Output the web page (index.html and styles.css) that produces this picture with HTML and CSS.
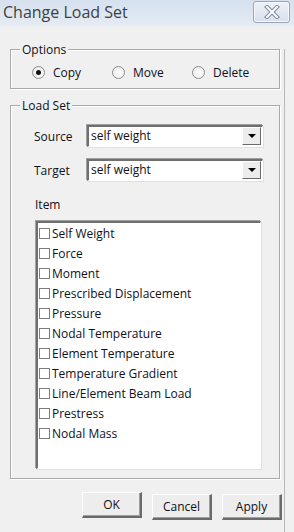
FILE: index.html
```html
<!DOCTYPE html>
<html lang="en">

<head>
    <meta charset="UTF-8">
    <title>Change Load Set</title>
    <link rel="stylesheet" href="styles.css">
</head>

<body>
    <div class="titlebar">
        <span class="title">Change Load Set</span>
        <span class="close-btn">
            <svg width="20" height="14" viewBox="0 0 20 14">
                <path d="M5 2 L15 12 M15 2 L5 12" stroke="#7d8797" stroke-width="4" stroke-linecap="square" fill="none"/>
                <path d="M5 2 L15 12 M15 2 L5 12" stroke="#ffffff" stroke-width="2" stroke-linecap="square" fill="none"/>
            </svg>
        </span>
    </div>

    <div class="content">
        <!-- Options -->
        <div class="group group-options">
            <span class="group-title">Options</span>
            <div class="radio-row">
                <label class="radio checked"><span class="dot"></span>Copy</label>
                <label class="radio"><span class="dot"></span>Move</label>
                <label class="radio"><span class="dot"></span>Delete</label>
            </div>
        </div>

        <!-- Load Set -->
        <div class="group group-loadset">
            <span class="group-title">Load Set</span>
            <div class="field-row">
                <span class="field-label">Source</span>
                <div class="combo">
                    <span class="combo-text">self weight</span>
                    <span class="combo-btn"><span class="arrow"></span></span>
                </div>
            </div>
            <div class="field-row">
                <span class="field-label">Target</span>
                <div class="combo">
                    <span class="combo-text">self weight</span>
                    <span class="combo-btn"><span class="arrow"></span></span>
                </div>
            </div>
            <div class="item-label">Item</div>
            <ul class="listbox">
                <li><span class="check"></span>Self Weight</li>
                <li><span class="check"></span>Force</li>
                <li><span class="check"></span>Moment</li>
                <li><span class="check"></span>Prescribed Displacement</li>
                <li><span class="check"></span>Pressure</li>
                <li><span class="check"></span>Nodal Temperature</li>
                <li><span class="check"></span>Element Temperature</li>
                <li><span class="check"></span>Temperature Gradient</li>
                <li><span class="check"></span>Line/Element Beam Load</li>
                <li><span class="check"></span>Prestress</li>
                <li><span class="check"></span>Nodal Mass</li>
            </ul>
        </div>

        <div class="buttons">
            <button class="btn btn-default">OK</button>
            <button class="btn">Cancel</button>
            <button class="btn">Apply</button>
        </div>
    </div>
</body>

</html>
```

FILE: styles.css
```css
body {
    margin: 0;
    padding: 0;
    width: 294px;
    height: 532px;
    background-color: #f0f0f0;
    font-family: "Open Sans", "Noto Sans", sans-serif;
    font-size: 12px;
    color: #101018;
    overflow: hidden;
}

/* title bar */
.titlebar {
    height: 26px;
    display: flex;
    align-items: center;
    justify-content: space-between;
    padding: 0 4px 0 3px;
    background: linear-gradient(to bottom, #d6e1ef, #e4ebf4);
}

.title {
    font-size: 16px;
    color: #3f3f3f;
    margin-top: -2px;
}

.close-btn {
    width: 35px;
    height: 20px;
    margin-top: -3px;
    display: flex;
    align-items: center;
    justify-content: center;
    border: 1px solid #9aa6b6;
    border-radius: 3px;
    background: linear-gradient(to bottom, #eef2f8, #d8e0eb);
    box-shadow: inset 0 0 0 1px #f6f8fb;
}

/* main area */
.content {
    width: 270px;
    height: 506px;
    padding: 0 4px 0 10px;
    border-right: 1px solid #b9b9b9;
}

.group {
    border: 1px solid #a9a9a9;
    box-shadow: 1px 1px 0 #fff, inset 1px 1px 0 #fff;
}

.group-title {
    display: table;
    margin: -7px 0 0 9px;
    padding: 0 2px;
    line-height: 14px;
    background-color: #f0f0f0;
}

.group-options {
    margin-top: 23px;
    padding: 0 0 9px 21px;
}

.group-options .group-title {
    margin-left: -12px;
}

.group-loadset {
    margin-top: 16px;
    padding: 0 0 9px 23px;
}

.group-loadset .group-title {
    margin-left: -14px;
}

/* radios */
.radio-row {
    display: flex;
    height: 14px;
    align-items: center;
    margin-top: 8px;
}

.radio {
    width: 80px;
    display: flex;
    align-items: center;
    gap: 8px;
}

.radio .dot {
    width: 11px;
    height: 11px;
    border: 1px solid #8d8d8d;
    border-radius: 50%;
    background: radial-gradient(circle at 60% 60%, #fdfdfd, #e6e6e6);
    display: flex;
    align-items: center;
    justify-content: center;
}

.radio.checked .dot::after {
    content: "";
    width: 5px;
    height: 5px;
    border-radius: 50%;
    background-color: #111;
}

/* combos */
.field-row {
    display: flex;
    align-items: center;
    margin-top: 12px;
}

.field-label {
    width: 53px;
}

.combo {
    width: 176px;
    height: 22px;
    box-sizing: border-box;
    display: flex;
    align-items: stretch;
    background-color: #fff;
    border-style: solid;
    border-width: 2px 1px 1px 2px;
    border-color: #6f6f6f #fff #fff #6f6f6f;
    box-shadow: -1px -1px 0 #a0a0a0, 1px 1px 0 #e0e0e0;
}

.combo-text {
    flex: 1;
    padding-left: 2px;
    line-height: 18px;
}

.combo-btn {
    width: 17px;
    margin: 0 1px 1px 0;
    display: flex;
    align-items: center;
    justify-content: center;
    background-color: #ececec;
    border-style: solid;
    border-width: 1px;
    border-color: #fff #6a6a6a #6a6a6a #fff;
}

.arrow {
    width: 0;
    height: 0;
    border-left: 4px solid transparent;
    border-right: 4px solid transparent;
    border-top: 4px solid #000;
}

.item-label {
    margin: 17px 0 9px 1px;
    line-height: 14px;
}

/* list */
.listbox {
    list-style: none;
    margin: 0 0 0 2px;
    padding: 0;
    width: 225px;
    height: 248px;
    box-sizing: border-box;
    background-color: #fff;
    border-style: solid;
    border-width: 2px 1px 1px 2px;
    border-color: #6f6f6f #fff #fff #6f6f6f;
    box-shadow: -1px -1px 0 #a0a0a0, 1px 1px 0 #e0e0e0;
}

.listbox li {
    height: 20px;
    display: flex;
    align-items: center;
    padding-left: 1px;
}

.check {
    width: 9px;
    height: 9px;
    border: 1px solid #7e7e7e;
    margin-right: 2px;
    background-color: #fff;
}

/* buttons */
.buttons {
    display: flex;
    justify-content: flex-end;
    align-items: flex-start;
    gap: 10px;
    margin: 15px -2px 0 0;
}

.btn {
    width: 60px;
    height: 26px;
    padding: 0;
    font-family: inherit;
    font-size: 12px;
    color: #101018;
    background-color: #ededed;
    border-style: solid;
    border-width: 1px 2px 2px 1px;
    border-color: #fff #6a6a6a #6a6a6a #fff;
    box-shadow: inset -1px -1px 0 #a0a0a0;
}

.btn-default {
    margin-top: -2px;
}
```
